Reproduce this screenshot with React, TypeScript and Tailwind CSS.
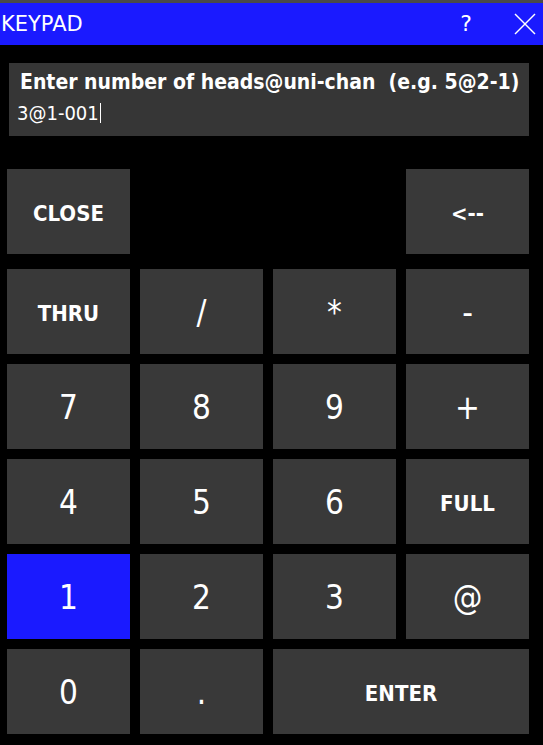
import React from 'react';

type Key = {
  label: string;
  kind: 'word' | 'glyph';
  span?: number;
  active?: boolean;
};

const keys: Key[] = [
  { label: 'THRU', kind: 'word' },
  { label: '/', kind: 'glyph' },
  { label: '*', kind: 'glyph' },
  { label: '-', kind: 'glyph' },
  { label: '7', kind: 'glyph' },
  { label: '8', kind: 'glyph' },
  { label: '9', kind: 'glyph' },
  { label: '+', kind: 'glyph' },
  { label: '4', kind: 'glyph' },
  { label: '5', kind: 'glyph' },
  { label: '6', kind: 'glyph' },
  { label: 'FULL', kind: 'word' },
  { label: '1', kind: 'glyph', active: true },
  { label: '2', kind: 'glyph' },
  { label: '3', kind: 'glyph' },
  { label: '@', kind: 'glyph' },
  { label: '0', kind: 'glyph' },
  { label: '.', kind: 'glyph' },
  { label: 'ENTER', kind: 'word', span: 2 },
];

const KeyButton = ({ label, kind, span, active }: Key) => (
  <button
    className={
      'flex h-[85px] items-center justify-center pt-[3px] text-white ' +
      (span === 2 ? 'col-span-2 ' : '') +
      (active ? 'bg-[#1a1aff] ' : 'bg-[#393939] ') +
      (kind === 'word' ? 'text-[22px] font-bold' : 'text-[33px] font-normal')
    }
  >
    {label}
  </button>
);

const App = () => {
  return (
    <div className="h-[745px] w-[543px] overflow-hidden bg-black font-['DejaVu_Sans_Condensed','DejaVu_Sans',sans-serif] text-white">
      <div className="h-[3px] bg-[#4a4a4a]" />
      <div className="flex h-[42px] items-center bg-[#1a1aff]">
        <span className="pl-[1px] font-['DejaVu_Sans',sans-serif] text-[21px] leading-none">KEYPAD</span>
        <span className="ml-auto mr-[42px] font-['DejaVu_Sans',sans-serif] text-[22px] leading-none">?</span>
        <svg width="22" height="22" viewBox="0 0 22 22" className="mr-[7px]">
          <line x1="1" y1="1" x2="21" y2="21" stroke="white" strokeWidth="1.4" />
          <line x1="21" y1="1" x2="1" y2="21" stroke="white" strokeWidth="1.4" />
        </svg>
      </div>

      <div className="pl-[7px]">
        <div className="ml-[2px] mt-[18px] flex h-[73px] w-[520px] flex-col bg-[#363636] pt-[5px]">
          <div className="pl-[11px] text-[21px] font-bold leading-[28px]">
            Enter number of heads@uni-chan&nbsp;&nbsp;(e.g. 5@2-1)
          </div>
          <div className="flex items-center pl-[8px] pt-[5px] text-[20px] leading-[24px]">
            3@1-001
            <span className="ml-[1px] h-[20px] w-px bg-white" />
          </div>
        </div>

        <div className="mt-[33px] grid grid-cols-[repeat(4,123px)] gap-x-[10px]">
          <KeyButton label="CLOSE" kind="word" />
          <div className="col-span-2" />
          <KeyButton label="<--" kind="word" />
        </div>

        <div className="mt-[15px] grid grid-cols-[repeat(4,123px)] gap-x-[10px] gap-y-[10px]">
          {keys.map(k => (
            <KeyButton key={k.label} {...k} />
          ))}
        </div>
      </div>
    </div>
  );
};

export default App;
